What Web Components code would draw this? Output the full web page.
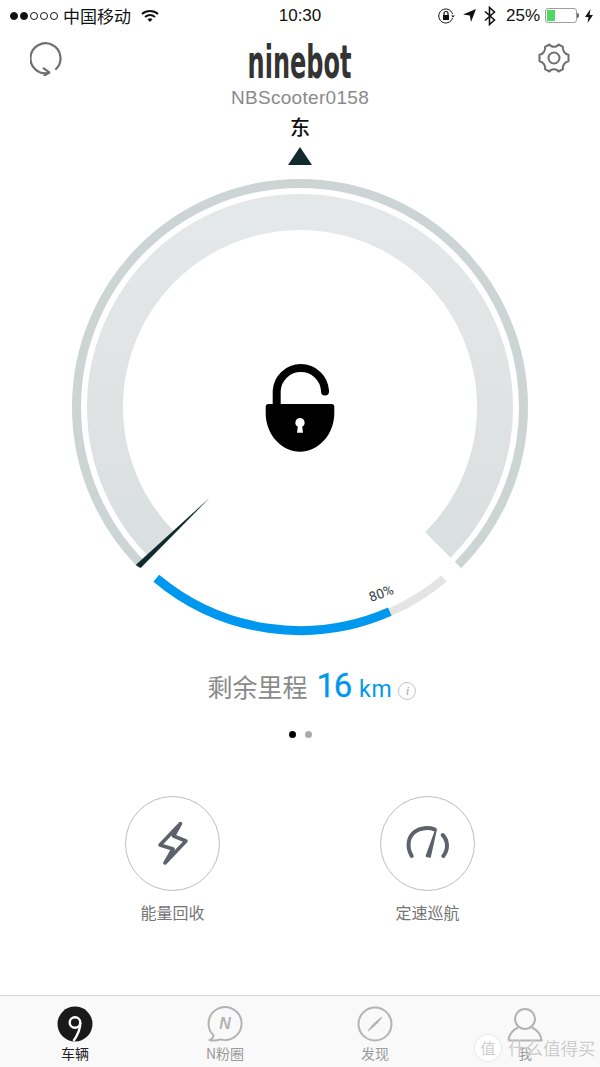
<!DOCTYPE html>
<html lang="zh">
<head>
<meta charset="utf-8">
<title>Ninebot</title>
<style>
  html, body { margin: 0; padding: 0; background: #fff; }
  body {
    width: 600px;
    height: 1067px;
    overflow: hidden;
    display: flex;
    flex-direction: column;
    font-family: "Liberation Sans", "Noto Sans CJK SC", sans-serif;
  }
</style>
</head>
<body>
<status-bar></status-bar>
<app-header name="NBScooter0158"></app-header>
<compass-gauge></compass-gauge>
<range-info km="16"></range-info>
<div style="display:flex;justify-content:center;gap:75px">
  <round-action label="能量回收">
    <svg viewBox="0 0 95 95" width="95" height="95" fill="none" stroke="#5c616b" stroke-width="3.6" stroke-linejoin="round" stroke-linecap="round"><path d="M55.500 27.500 L35 49 L48 53 L40 67 L61 45 L48.500 40 Z"/></svg>
  </round-action>
  <round-action label="定速巡航">
    <svg viewBox="0 0 95 95" width="95" height="95" fill="none" stroke="#5c616b" stroke-linecap="round"><path stroke-width="4" d="M31.700 60 C26 50 28.500 40.500 35 35.700 C40 32 48 31 54.500 33.300"/><path stroke-width="4" d="M62.700 39 C67.500 44 69 53 63.300 60"/><path d="M46.500 60 L56 33.500 L50 60.800 Z" fill="#5c616b" stroke-width="1.800" stroke-linejoin="round"/></svg>
  </round-action>
</div>
<tab-bar></tab-bar>

<script>
  class StatusBar extends HTMLElement {
    constructor() {
      super();
      this.attachShadow({mode: 'open'});
    }
    connectedCallback() {
      this.shadowRoot.innerHTML = `
        <style>
          :host { display: grid; grid-template-columns: 1fr auto 1fr; align-items: center; height: 31px; color: #111; }
          .dots { display: flex; gap: 2px; margin-right: 5px; }
          .dots i { width: 6px; height: 6px; border: 1px solid #111; border-radius: 50%; }
          .dots i.on { background: #111; }
          .left, .right { display: flex; align-items: center; }
          .left { font-size: 17px; padding-left: 10px; }
          .left svg { margin-left: 10px; }
          .right { justify-content: flex-end; padding-right: 7px; }
          .time { font-size: 17px; }
          .pct { font-size: 17px; margin: 0 5px 0 10px; }
          .batt { width: 32px; height: 15px; box-sizing: border-box; border: 1px solid #a0a0a0; border-radius: 3px; padding: 1px; display: flex; }
          .batt b { width: 8px; background: #4cd964; }
          .nub { width: 2px; height: 5px; background: #666; border-radius: 0 2px 2px 0; margin-right: 6px; }
        </style>
        <div class="left">
          <div class="dots"><i class="on"></i><i class="on"></i><i></i><i></i><i></i></div>
          <span>中国移动</span>
          <svg width="18" height="14" viewBox="0 0 18 14"><path d="M1 5 C5.500 1 12.500 1 17 5" fill="none" stroke="#111" stroke-width="2"/><path d="M4 8 C7 5.500 11 5.500 14 8" fill="none" stroke="#111" stroke-width="2"/><path d="M6.500 10.200 C8 9 10 9 11.500 10.200 L9 13 Z" fill="#111"/></svg>
        </div>
        <div class="time">10:30</div>
        <div class="right">
          <svg width="18" height="18" viewBox="0 0 18 18" fill="none" stroke="#111"><path d="M15.500 11 A7 7 0 1 1 15.500 7"/><path d="M14 8.500 L16 10.500 L17.800 8.500 Z" fill="#111" stroke="none"/><rect x="6" y="8" width="6" height="5" fill="#111" stroke="none"/><path d="M7 8 V6.500 A2 2 0 0 1 11 6.500 V8" stroke-width="1.200"/></svg>
          <svg style="margin-left:8px" width="13" height="13" viewBox="0 0 13 13"><path d="M13 0 L8 13 L6.800 6.500 L0 5.500 Z" fill="#111"/></svg>
          <svg style="margin-left:8px" width="12" height="20" viewBox="0 0 12 20" fill="none" stroke="#111" stroke-width="1.600"><path d="M1 5.500 L10.500 14 L5.500 18.500 V1.500 L10.500 6 L1 14.500"/></svg>
          <span class="pct">25%</span>
          <div class="batt"><b></b></div>
          <div class="nub"></div>
          <svg width="8" height="14" viewBox="0 0 8 14"><path d="M5.500 0 L0 8 H3.500 L2.500 14 L8 6 H4.500 Z" fill="#111"/></svg>
        </div>`;
    }
  }
  customElements.define('status-bar', StatusBar);

  class AppHeader extends HTMLElement {
    constructor() {
      super();
      this.attachShadow({mode: 'open'});
    }
    connectedCallback() {
      this.shadowRoot.innerHTML = `
        <style>
          :host { display: flex; justify-content: space-between; align-items: flex-start; padding: 11px 30px 0 30px; height: 79px; box-sizing: border-box; }
          .mid { display: flex; flex-direction: column; align-items: center; margin-top: -4px; width: 200px; }
          .logo { font: bold 46px/48px "DejaVu Sans Condensed", "DejaVu Sans", sans-serif; color: #333; transform: scaleX(.58); height: 48px; white-space: nowrap; }
          .name { font-size: 19px; line-height: 20px; margin-top: 2px; color: #8a8a8a; letter-spacing: .3px; white-space: nowrap; }
          svg { display: block; }
        </style>
        <svg width="32" height="34" viewBox="-1 0 32 34" fill="none" stroke="#6f6f6f" stroke-width="2.200" stroke-linecap="round" stroke-linejoin="round"><path d="M25 27 A15 15 0 1 0 18 30.900"/><path d="M12.700 26.300 L18.300 30.300 L13.300 33.700"/></svg>
        <div class="mid">
          <div class="logo">ninebot</div>
          <div class="name">${this.getAttribute('name')}</div>
        </div>
        <svg width="32" height="32" viewBox="0 0 32 32" fill="none" stroke="#6f6f6f" stroke-width="2" stroke-linejoin="round"><path d="M11.500 2.500 C13 5.500 19 5.500 20.500 2.500 L25 4.800 C24 8 27 12.500 30.500 12.800 V19.200 C27 19.500 24 24 25 27.200 L20.500 29.500 C19 26.500 13 26.500 11.500 29.500 L7 27.200 C8 24 5 19.500 1.500 19.200 V12.800 C5 12.500 8 8 7 4.800 Z"/><circle cx="16" cy="16" r="5.500"/></svg>`;
    }
  }
  customElements.define('app-header', AppHeader);

  class CompassGauge extends HTMLElement {
    constructor() {
      super();
      this.attachShadow({mode: 'open'});
    }
    // point on the dial, deg measured clockwise from straight down
    pt(r, deg) {
      const a = deg * Math.PI / 180;
      return (300 + r * Math.sin(a)).toFixed(1) + ' ' + (297 + r * Math.cos(a)).toFixed(1);
    }
    connectedCallback() {
      // dial centre sits at y=297 in this box
      const ring = `M${this.pt(223.5, -45)} A223.500 223.500 0 1 1 ${this.pt(223.5, 45)}`;
      const band = `M${this.pt(195, -45)} A195 195 0 1 1 ${this.pt(195, 45)}`;
      const grey = `M${this.pt(224, 23.7)} A224 224 0 0 0 ${this.pt(224, 40)}`;
      const blue = `M${this.pt(223.5, -40)} A223.500 223.500 0 0 0 ${this.pt(223.5, 23.7)}`;
      this.shadowRoot.innerHTML = `
        <style>
          :host { display: block; height: 540px; }
          svg { display: block; }
          .dir { font: 500 20px "Noto Sans CJK SC", sans-serif; fill: #111; }
          .pct { font: 13.500px "Roboto", sans-serif; fill: #333d42; }
        </style>
        <svg width="600" height="540" viewBox="0 0 600 540">
          <defs>
            <linearGradient id="g" x1="0" y1="0" x2="0" y2="1">
              <stop offset="0" stop-color="#e5e8e8"/>
              <stop offset="1" stop-color="#dadfdf"/>
            </linearGradient>
          </defs>
          <text class="dir" x="300" y="25" text-anchor="middle">东</text>
          <path d="M288 55 L300 37 L312 55 Z" fill="#12292e"/>
          <path d="${ring}" fill="none" stroke="#ccd4d4" stroke-width="9"/>
          <path d="${band}" fill="none" stroke="url(#g)" stroke-width="36"/>
          <path d="${grey}" fill="none" stroke="#e4e4e4" stroke-width="8"/>
          <path d="${blue}" fill="none" stroke="#0098ee" stroke-width="9"/>
          <path d="M210 387.500 L135.700 455 L140.700 458 Z" fill="#12292e"/>
          <text class="pct" transform="translate(371 492) rotate(-20)">80%</text>
          <path fill="#000" fill-rule="evenodd" d="M268 294 H332 Q334.300 294 334.300 296.500 V303 C334.300 325 318 341.700 300 341.700 C282 341.700 265.700 325 265.700 303 V296.500 Q265.700 294 268 294 Z M300 308 A4.700 4.700 0 0 0 297.800 316.800 L297 322.700 H303 L302.200 316.800 A4.700 4.700 0 0 0 300 308 Z"/>
          <path d="M276.700 296 V280.700 A24.200 24.200 0 0 1 325 280.700 V281.500" fill="none" stroke="#000" stroke-width="8" stroke-linecap="round"/>
        </svg>`;
    }
  }
  customElements.define('compass-gauge', CompassGauge);

  class RangeInfo extends HTMLElement {
    constructor() {
      super();
      this.attachShadow({mode: 'open'});
    }
    connectedCallback() {
      this.shadowRoot.innerHTML = `
        <style>
          :host { display: flex; flex-direction: column; align-items: center; height: 146px; }
          .row { display: flex; align-items: baseline; height: 52px; padding: 16px 0 0 24px; }
          .label { font: 25px "Noto Sans CJK SC", sans-serif; color: #8a8a8a; }
          .num { font: 400 33px "Roboto", sans-serif; color: #0098ee; margin-left: 9px; letter-spacing: -1.300px; -webkit-text-stroke: .3px #0098ee; }
          .unit { font: 400 23px "Roboto", sans-serif; color: #0098ee; margin-left: 8px; letter-spacing: .8px; }
          .info { width: 16px; height: 16px; border: 1px solid #c4c4c4; border-radius: 50%; font: italic 13px/16px "Liberation Serif", serif; color: #a8a8a8; text-align: center; margin-left: 6px; transform: translateY(-2px); }
          .dots { display: flex; gap: 9px; margin-top: 12.500px; }
          .dots i { width: 7px; height: 7px; border-radius: 50%; background: #aaa; }
          .dots i.on { background: #000; }
        </style>
        <div class="row">
          <span class="label">剩余里程</span>
          <span class="num">${this.getAttribute('km')}</span>
          <span class="unit">km</span>
          <span class="info">i</span>
        </div>
        <div class="dots"><i class="on"></i><i></i></div>`;
    }
  }
  customElements.define('range-info', RangeInfo);

  class RoundAction extends HTMLElement {
    constructor() {
      super();
      this.attachShadow({mode: 'open'});
    }
    connectedCallback() {
      this.shadowRoot.innerHTML = `
        <style>
          :host { display: flex; flex-direction: column; align-items: center; width: 180px; }
          .circle { width: 95px; height: 95px; box-sizing: border-box; border: 1px solid #bdbdbd; border-radius: 50%; position: relative; }
          ::slotted(svg) { position: absolute; left: -1px; top: -1px; }
          .label { font: 16px/22px "Noto Sans CJK SC", sans-serif; color: #757575; margin-top: 10px; }
        </style>
        <div class="circle"><slot></slot></div>
        <div class="label">${this.getAttribute('label')}</div>`;
    }
  }
  customElements.define('round-action', RoundAction);

  class TabBar extends HTMLElement {
    constructor() {
      super();
      this.attachShadow({mode: 'open'});
    }
    connectedCallback() {
      this.shadowRoot.innerHTML = `
        <style>
          :host { display: grid; grid-template-columns: repeat(4, 150px); margin-top: auto; height: 72px; box-sizing: border-box; border-top: 1px solid #d8d8d8; background: #f9f9f9; position: relative; }
          .tab { display: flex; flex-direction: column; align-items: center; padding-top: 10px; }
          .tab svg { display: block; }
          .tab span { font: 14px/18px "Noto Sans CJK SC", sans-serif; color: #9a9a9a; margin-top: 2px; }
          .tab.on span { color: #222; }
          .mark { position: absolute; left: 475px; top: 39px; display: flex; align-items: center; color: rgba(190,190,190,.8); font: 17.500px/26px "Noto Sans CJK SC", sans-serif; white-space: nowrap; text-shadow: 0 0 2px #fff; }
          .mark b { font-weight: 400; width: 26px; height: 26px; border-radius: 50%; background: rgba(255,255,255,.9); font-size: 15px; line-height: 26px; text-align: center; margin-right: 7px; box-shadow: 0 0 2px rgba(0,0,0,.2); }
        </style>
        <div class="tab on">
          <svg width="36" height="36" viewBox="0 0 36 36"><circle cx="18" cy="18" r="17.500" fill="#1a1a1a"/><circle cx="18" cy="16.500" r="5.300" fill="none" stroke="#fff" stroke-width="2.400"/><path d="M23.300 17 C23.300 24 20 30 16.500 35" fill="none" stroke="#fff" stroke-width="2.400"/></svg>
          <span>车辆</span>
        </div>
        <div class="tab">
          <svg width="36" height="36" viewBox="0 0 36 36" fill="none" stroke="#b3b3b3" stroke-width="2" stroke-linejoin="round"><path d="M6.600 29.400 C6.500 31 4.500 33.500 2.500 34 C6 35 10 34.500 13.500 33.400 A16.500 16.500 0 1 0 6.600 29.400 Z"/><text x="18" y="23" text-anchor="middle" font-family="Liberation Sans, sans-serif" font-weight="700" font-style="italic" font-size="16" fill="#b3b3b3" stroke="none">N</text></svg>
          <span>N粉圈</span>
        </div>
        <div class="tab">
          <svg width="36" height="36" viewBox="0 0 36 36" fill="none" stroke="#b3b3b3" stroke-width="2"><circle cx="18" cy="18" r="16.500"/><path d="M11 25 Q15 18 25 11 Q21 18 11 25 Z" fill="#b3b3b3" stroke-width="1" stroke-linejoin="round"/></svg>
          <span>发现</span>
        </div>
        <div class="tab">
          <svg width="36" height="36" viewBox="0 0 36 36" fill="none" stroke="#b3b3b3" stroke-width="2"><circle cx="18" cy="13" r="10"/><path d="M1.500 34.500 H34.500 C34 28 29 23.500 25 21.500 M11 21.500 C7 23.500 2 28 1.500 34.500"/></svg>
          <span>我</span>
        </div>
        <div class="mark"><b>值</b><span>什么值得买</span></div>`;
    }
  }
  customElements.define('tab-bar', TabBar);
</script>
</body>
</html>
